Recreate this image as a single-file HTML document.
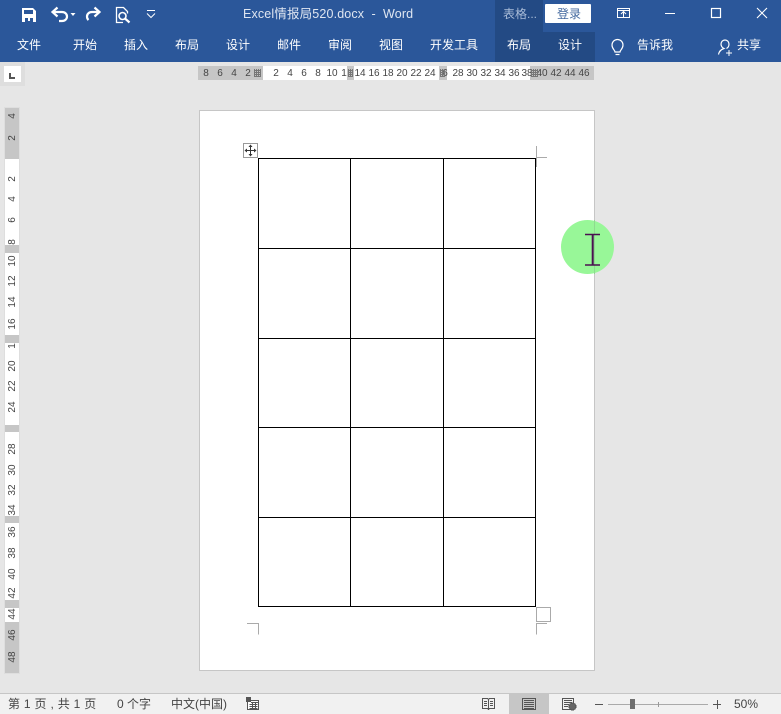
<!DOCTYPE html>
<html lang="zh-CN">
<head>
<meta charset="utf-8">
<style>
html,body{margin:0;padding:0;width:781px;height:714px;overflow:hidden;background:#e6e6e6}
body{position:relative;font-family:"Liberation Sans","Noto Sans CJK SC",sans-serif;}
div,span,svg{position:absolute;display:block}
.t{white-space:nowrap;line-height:16px;height:16px}
.m{color:#fff;font-size:12px;top:37px;transform:translateX(-50%)}
.b{left:0;top:0}
.hn{top:66px;height:14px;line-height:15px;font-size:10px;color:#444;transform:translateX(-50%);white-space:nowrap}
.hg{top:66px;height:14px;background:#c6c6c6}
.hw{top:66px;height:14px;background:#fff}
.vg{left:5px;width:14px;background:#c6c6c6}
.vw{left:5px;width:14px;background:#fff}
.vn{left:12.500px;width:20px;height:12px;line-height:12px;font-size:10px;color:#444;text-align:center;transform:translate(-50%,-50%) rotate(-90deg);white-space:nowrap}
.s{top:696px;font-size:12px;color:#444;white-space:nowrap;line-height:16px}
</style>
</head>
<body>
<!-- title bar -->
<div style="left:0;top:0;width:781px;height:62px;background:#2b579a"></div>
<div style="left:495px;top:0;width:48px;height:32px;background:#234a84"></div>
<div style="left:495px;top:32px;width:100px;height:30px;background:#234a84"></div>

<svg class="b" width="781" height="62" viewBox="0 0 781 62" fill="none" stroke="#fff">
  <!-- save -->
  <path d="M22 8h11l3 3v11H22z" fill="#fff" stroke="none"/>
  <rect x="24" y="10" width="9" height="4" fill="#2b579a" stroke="none"/>
  <rect x="25" y="18" width="8" height="4" fill="#2b579a" stroke="none"/>
  <rect x="28" y="18" width="2" height="3" fill="#fff" stroke="none"/>
  <!-- undo -->
  <path d="M53 12h9c3 0 5 2 5 4.500s-2 4.500-5 4.500h-3" stroke-width="2.200"/>
  <path d="M57.500 7.500L52.500 12l5 4.500" stroke-width="2.200"/>
  <path d="M70.500 13h5l-2.500 3z" fill="#fff" stroke="none"/>
  <!-- redo -->
  <path d="M99 12h-7c-3 0-5 2-5 4.500 0 1.500.7 2.800 1.500 3.500" stroke-width="2.200"/>
  <path d="M94.500 7.500l5 4.500-5 4.500" stroke-width="2.200"/>
  <!-- print preview -->
  <path d="M123 22.500h-6.500V7.500h7l4 4v2" stroke-width="1.300"/>
  <circle cx="122.500" cy="16" r="3.500" stroke-width="1.600"/>
  <path d="M125 18.500l4.500 4" stroke-width="2.200"/>
  <!-- customise -->
  <path d="M147 10.500h8" stroke-width="1"/>
  <path d="M147 13.500l4 4 4-4" stroke-width="1"/>
  <!-- ribbon display -->
  <rect x="617.500" y="8.500" width="12" height="9" stroke-width="1"/>
  <path d="M617.500 10.500h12M623.500 17v-5M621 14l2.500-2.500 2.500 2.500" stroke-width="1"/>
  <!-- min / max / close -->
  <path d="M665 13.500h10" stroke-width="1"/>
  <rect x="711.500" y="8.500" width="9" height="9" stroke-width="1.200"/>
  <path d="M757 8l10 10M767 8l-10 10" stroke-width="1.100"/>
  <!-- bulb -->
  <path d="M615 52c0-2-3-3-3-7a5.500 5.500 0 0 1 11 0c0 4-3 5-3 7z" stroke-width="1.200"/>
  <path d="M615.500 54.500h4" stroke-width="1.200"/>
  <!-- share -->
  <path d="M718.500 54.500c.5-3 2.500-5 5.500-6-2-1-3-3-3-4.500a4 4 0 0 1 8 0c0 1.500-.5 3.500-2.500 4.500" stroke-width="1.200"/>
  <path d="M729 50v6M726 53h6" stroke-width="1"/>
</svg>

<div class="t" style="left:243px;top:6px;color:#dfe6f1;font-size:12.500px;letter-spacing:.15px;">Excel情报局520.docx&nbsp; -&nbsp; Word</div>
<div class="t" style="left:503px;top:6px;color:#a9bcd8;font-size:12px;">表格...</div>
<div style="left:545px;top:4px;width:46px;height:19px;background:#fff;border-radius:1px"></div>
<div class="t" style="left:557px;top:6px;color:#44699f;font-size:12px;">登录</div>

<div class="t m" style="left:29px">文件</div>
<div class="t m" style="left:85px">开始</div>
<div class="t m" style="left:136px">插入</div>
<div class="t m" style="left:187px">布局</div>
<div class="t m" style="left:238px">设计</div>
<div class="t m" style="left:289px">邮件</div>
<div class="t m" style="left:340px">审阅</div>
<div class="t m" style="left:391px">视图</div>
<div class="t m" style="left:454px">开发工具</div>
<div class="t m" style="left:519px">布局</div>
<div class="t m" style="left:570px">设计</div>
<div class="t m" style="left:655px">告诉我</div>
<div class="t m" style="left:749px">共享</div>

<!-- corner tab -->
<div style="left:0;top:62px;width:25px;height:24px;background:#dedede"></div>
<div style="left:4px;top:66px;width:17px;height:16px;background:#fff"></div>
<div style="left:9px;top:73px;width:2px;height:6px;background:#555"></div>
<div style="left:9px;top:77px;width:6px;height:2px;background:#555"></div>

<!-- horizontal ruler -->
<div class="hg" style="left:198px;width:65px"></div>
<div class="hw" style="left:263px;width:84px"></div>
<div class="hg" style="left:347px;width:7px"></div>
<div class="hw" style="left:354px;width:85px"></div>
<div class="hg" style="left:439px;width:8px"></div>
<div class="hw" style="left:447px;width:83px"></div>
<div class="hg" style="left:530px;width:64px"></div>
<div class="hn" style="left:206px">8</div><div class="hn" style="left:220px">6</div><div class="hn" style="left:234px">4</div><div class="hn" style="left:248px">2</div>
<div class="hn" style="left:276px">2</div><div class="hn" style="left:290px">4</div><div class="hn" style="left:304px">6</div><div class="hn" style="left:318px">8</div><div class="hn" style="left:332px">10</div><div class="hn" style="left:344px">1</div>
<div class="hn" style="left:360px">14</div><div class="hn" style="left:374px">16</div><div class="hn" style="left:388px">18</div><div class="hn" style="left:402px">20</div><div class="hn" style="left:416px">22</div><div class="hn" style="left:430px">24</div>
<div class="hn" style="left:445px">6</div><div class="hn" style="left:458px">28</div><div class="hn" style="left:472px">30</div><div class="hn" style="left:486px">32</div><div class="hn" style="left:500px">34</div><div class="hn" style="left:514px">36</div><div class="hn" style="left:527px">38</div>
<div class="hn" style="left:542px">40</div><div class="hn" style="left:556px">42</div><div class="hn" style="left:570px">44</div><div class="hn" style="left:584px">46</div>
<svg class="b" width="781" height="90" fill="none" stroke="#777" stroke-width="1" shape-rendering="crispEdges">
  <path d="M254.500 69v8M256.500 69v8M258.500 69v8M260.500 69v8M254 70.500h7M254 72.500h7M254 74.500h7M254 76.500h7"/>
  <path d="M348.500 69v8M350.500 69v8M352.500 69v8M348 70.500h5M348 72.500h5M348 74.500h5M348 76.500h5"/>
  <path d="M440.500 69v8M442.500 69v8M444.500 69v8M440 70.500h5M440 72.500h5M440 74.500h5M440 76.500h5"/>
  <path d="M531.500 69v8M533.500 69v8M535.500 69v8M537.500 69v8M531 70.500h7M531 72.500h7M531 74.500h7M531 76.500h7"/>
</svg>

<!-- vertical ruler -->
<div style="left:4px;top:107px;width:16px;height:567px;background:#dedede"></div>
<div class="vg" style="top:108px;height:51px"></div>
<div class="vw" style="top:159px;height:86px"></div>
<div class="vg" style="top:245px;height:8px"></div>
<div class="vw" style="top:253px;height:82px"></div>
<div class="vg" style="top:335px;height:8px"></div>
<div class="vw" style="top:343px;height:82px"></div>
<div class="vg" style="top:425px;height:7px"></div>
<div class="vw" style="top:432px;height:84px"></div>
<div class="vg" style="top:516px;height:7px"></div>
<div class="vw" style="top:523px;height:77px"></div>
<div class="vg" style="top:600px;height:8px"></div>
<div class="vw" style="top:608px;height:14px"></div>
<div class="vg" style="top:622px;height:51px"></div>
<div class="vn" style="top:116px">4</div><div class="vn" style="top:138px">2</div>
<div class="vn" style="top:179px">2</div><div class="vn" style="top:199px">4</div><div class="vn" style="top:220px">6</div><div class="vn" style="top:242px">8</div>
<div class="vn" style="top:261px">10</div><div class="vn" style="top:281px">12</div><div class="vn" style="top:302px">14</div><div class="vn" style="top:324px">16</div><div class="vn" style="top:346px">1</div>
<div class="vn" style="top:366px">20</div><div class="vn" style="top:386px">22</div><div class="vn" style="top:407px">24</div>
<div class="vn" style="top:449px">28</div><div class="vn" style="top:470px">30</div><div class="vn" style="top:490px">32</div><div class="vn" style="top:510px">34</div>
<div class="vn" style="top:532px">36</div><div class="vn" style="top:553px">38</div><div class="vn" style="top:574px">40</div><div class="vn" style="top:593px">42</div>
<div class="vn" style="top:614px">44</div><div class="vn" style="top:635px">46</div><div class="vn" style="top:657px">48</div>

<!-- page -->
<div style="left:199px;top:110px;width:394px;height:559px;background:#fff;border:1px solid #c6c6c6;box-sizing:content-box"></div>

<svg class="b" width="781" height="714" fill="none" shape-rendering="crispEdges">
  <!-- table -->
  <g stroke="#000" stroke-width="1">
    <rect x="258.500" y="158.500" width="277" height="448"/>
    <path d="M350.500 158v449M443.500 158v449M258 248.500h278M258 338.500h278M258 427.500h278M258 517.500h278"/>
  </g>
  <!-- crop marks -->
  <g stroke="#aaa" stroke-width="1">
    <path d="M536.500 146v21M536 157.500h11"/>
    <path d="M247 623.500h11.500v11"/>
    <path d="M547 623.500h-10.500v11"/>
  </g>
  <rect x="536.500" y="607.500" width="14" height="14" fill="#fff" stroke="#aaa"/>
  <!-- table handle -->
  <rect x="243.500" y="143.500" width="14" height="14" fill="#fff" stroke="#999"/>
</svg>
<svg class="b" width="781" height="714" fill="none">
  <path d="M250.500 146v9M246 150.500h9" stroke="#333" stroke-width="1"/>
  <path d="M250.500 144.500l-2 2.500h4zM250.500 156.500l-2-2.500h4zM244.500 150.500l2.500-2v4zM256.500 150.500l-2.500-2v4z" fill="#333"/>
</svg>

<!-- highlight and cursor -->
<div style="left:561px;top:220px;width:53px;height:54px;border-radius:50%;background:#98f798"></div>
<div style="left:594px;top:220px;width:1px;height:54px;background:#8fd990"></div>
<svg class="b" width="781" height="714" fill="none" stroke="#4a1150">
  <path d="M585 234.500h15M585 265h15" stroke-width="1.600"/>
  <path d="M592.700 234v31" stroke-width="2"/>
</svg>

<!-- status bar -->
<div style="left:0;top:693px;width:781px;height:21px;background:#f1f1f1;border-top:1px solid #c6c6c6;box-sizing:border-box"></div>
<div class="s" style="left:8px;word-spacing:.6px">第 1 页 , 共 1 页</div>
<div class="s" style="left:117px">0 个字</div>
<div class="s" style="left:171px">中文(中国)</div>
<div class="s" style="left:734px">50%</div>
<div style="left:509px;top:694px;width:40px;height:20px;background:#c6c6c6"></div>
<svg class="b" width="781" height="714" fill="none" stroke="#555" stroke-width="1" shape-rendering="crispEdges">
  <!-- macro icon -->
  <rect x="247.500" y="700.500" width="11" height="9" fill="#fff"/>
  <rect x="246" y="697" width="5" height="5" fill="#555" stroke="none"/>
  <path d="M251 702.500h7M249.500 704.500h8M249.500 706.500h8M249.500 708.500h8M252.500 703v6M255.500 703v6"/>
  <!-- read mode -->
  <path d="M482.500 698.500h5l1 1 1-1h5v10h-5l-1 1-1-1h-5zM488.500 700v9M484 701.500h3M484 703.500h3M484 705.500h3M490 701.500h3M490 703.500h3M490 705.500h3"/>
  <!-- print layout -->
  <rect x="522.500" y="698.500" width="13" height="11"/>
  <path d="M524 700.500h10M524 702.500h10M524 704.500h10M524 706.500h10M524 708.500h10"/>
  <!-- web layout -->
  <path d="M572.500 709.500h-10v-11h11v5M564 700.500h8M564 702.500h8M564 704.500h5M564 706.500h4"/>
  <circle cx="572.500" cy="706.500" r="3.500" fill="#666"/>
  <!-- zoom -->
  <path d="M595 704.500h8" stroke="#555"/>
  <path d="M608 704.500h100" stroke="#aaa"/>
  <path d="M658.500 702v5" stroke="#999"/>
  <path d="M713 704.500h8M717.500 700v9" stroke="#555"/>
</svg>
<div style="left:630px;top:699px;width:5px;height:10px;background:#6e6e6e"></div>
</body>
</html>
